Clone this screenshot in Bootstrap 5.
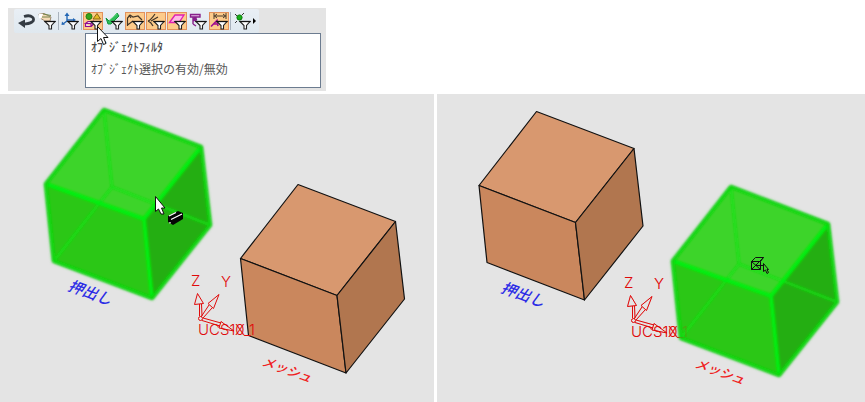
<!DOCTYPE html>
<html lang="ja">
<head>
<meta charset="utf-8">
<meta name="viewport" content="width=device-width, initial-scale=1">
<title>オブジェクトフィルタ</title>
<link rel="stylesheet" href="https://cdn.jsdelivr.net/npm/bootstrap@5.3.0/dist/css/bootstrap.min.css">
<style>
body{background:#fff;font-family:"Liberation Sans","Noto Sans CJK JP",sans-serif}
.page-stack{gap:3px}
.filter-panel{background:#e4e4e4;margin:8px 0 0 8px;padding:1px 5px 3px 6px;width:318px;max-width:100%}
.filter-bar{background:linear-gradient(#e9eff5,#dfe8ef);height:24px;width:245px;gap:1px;padding:0 2px;border-radius:2px}
.tool{width:20px;height:18px;padding:0;border:1px solid transparent;background:none;flex:none;display:block}
.tool[aria-pressed=true]{background:#fdcb8a;border-color:#e2915c}
.tool svg{display:block;margin:-1px;width:20px;height:18px}
.divider{width:1px;height:18px;background:#a9b3bd;flex:none}
.hint{background:#fff;border:1px solid #6c7c90;margin-left:71px;height:55px;padding:5px;color:#555;font-family:"Noto Sans CJK JP",sans-serif}
.hint-title{font-size:12px;line-height:16px;font-weight:500;color:#4a4a4a}
.hint-text{font-size:12px;line-height:16px;margin-top:6px}
.pointer{left:88px;top:17px;width:13px;height:21px}
.views{display:grid;grid-template-columns:434fr 428fr;gap:3px}
.view{background:#e4e4e4}
.view svg{display:block;width:100%;height:auto}
.lbl{font:500 15px "Noto Sans CJK JP",sans-serif}
.axis{font:300 15px Inter,"Liberation Sans",sans-serif;fill:#e00a0a}
</style>
<script src="https://cdn.jsdelivr.net/npm/bootstrap@5.3.0/dist/js/bootstrap.bundle.min.js"></script>
</head>
<body>
<svg width="0" height="0" class="position-absolute" aria-hidden="true">
<defs>
<g id="funnel"><path d="M8 9.5H18L14.5 13.5V17H12V13.5Z" fill="#fff" stroke="#222" stroke-width="1.1"/><path d="M7.500 9.500H18.500" stroke="#111" stroke-width="1.3"/></g>
<filter id="glow" x="-10%" y="-10%" width="120%" height="120%"><feGaussianBlur stdDeviation="1.5"/></filter>
<filter id="soft" x="-10%" y="-10%" width="120%" height="120%"><feGaussianBlur stdDeviation="1"/></filter>
<g id="block" stroke="#111" stroke-width="1.2" stroke-linejoin="round">
<path d="M298 184.500L395.500 221.500L337 295.500L240.500 258.500Z" fill="#d8986f"/>
<path d="M240.500 258.500L337 295.500L346 373L248.500 335.500Z" fill="#ca875d"/>
<path d="M395.500 221.500L404.500 299L346 373L337 295.500Z" fill="#b1764f"/>
</g>
<g id="picked" stroke-linejoin="round" fill="none">
<path d="M104 110L201 147L210 225L152 298L54 261L46 184Z" stroke="#44c944" stroke-width="4" filter="url(#glow)"/>
<path d="M104 110L201 147L144 219L46 184Z" fill="#3dd42a"/>
<path d="M46 184L144 219L152 298L54 261Z" fill="#2bc716"/>
<path d="M201 147L210 225L152 298L144 219Z" fill="#24ae12"/>
<g filter="url(#soft)">
<path d="M104 110L112 187L210 225M112 187L54 261" stroke="#10e410" stroke-width="2.500" opacity=".8"/>
<path d="M46 184L144 219L152 298M144 219L201 147" stroke="#00ee08" stroke-width="4"/>
<path d="M104 110L201 147L210 225L152 298L54 261L46 184Z" stroke="#0bd80b" stroke-width="3"/>
</g>
</g>
<g id="ucs">
<g fill="none" stroke="#e00a0a" stroke-width="1">
<circle cx="200.500" cy="318.500" r="2"/>
<path d="M199.500 316V304M202 316L201.500 304M194.500 304.500L197.500 293.500L203.500 303.500ZM201 317L209 305M203 318L212 308M208 303.500L219 294.500L213.500 308.500ZM203 318L221 323M202 320.500L220 326M221 321.500L234 331L219 328Z"/>
</g>
<g class="axis"><text x="191" y="286">Z</text><text x="221" y="287">Y</text><text x="198" y="335">UCS10_1</text><text x="235" y="335">X</text></g>
</g>
<g id="names" class="lbl">
<text transform="translate(67 290) rotate(20) skewX(-15)" fill="#2c2ce6">押出し</text>
<text transform="translate(261 365) rotate(20) skewX(-15)" fill="#ef2020" font-size="13">メッシュ</text>
</g>
</defs>
</svg>
<main class="d-flex flex-column page-stack">
<section class="filter-panel position-relative">
<div class="filter-bar d-flex align-items-center" role="toolbar" aria-label="フィルタ">
<button class="tool" type="button" aria-label="戻る"><svg viewBox="0 0 20 18"><path d="M8 4.500C16 2 20 7 16 10C13 12 10 12 7 12" fill="none" stroke="#343b43" stroke-width="2.800"/><path d="M2 11L9 7.500V16Z" fill="#343b43"/></svg></button>
<button class="tool" type="button" aria-label="選択"><svg viewBox="0 0 20 18"><path d="M2 2L7 1.500L14 5L13 9L8 9L3 6Z" fill="#f5d9b5" stroke="#9b8970"/><path d="M2 1.500L6 2L4 7L2 6Z" fill="#fff"/><path d="M6 2L14 3.500M5 5H13" stroke="#74864c"/><use href="#funnel"/></svg></button>
<span class="divider"></span>
<button class="tool" type="button" aria-label="座標系"><svg viewBox="0 0 20 18"><path d="M7 2V10M7 9L3 12M7 8H14" fill="none" stroke="#2367b5" stroke-width="1.400"/><path d="M4.500 4L7 .5L9.500 4ZM1.500 13L2 9.500L5 12.500ZM13 6L16 8L13 10Z" fill="#2367b5"/><use href="#funnel"/></svg></button>
<span class="divider"></span>
<button class="tool" type="button" aria-label="オブジェクトフィルタ" aria-pressed="true" aria-describedby="filter-hint"><svg viewBox="0 0 20 18"><circle cx="6" cy="4.500" r="3" fill="#36a51a" stroke="#247d13"/><path d="M10 7L14 1.500L17.500 7Z" fill="#e5b928" stroke="#8b6811"/><path d="M2.500 11.500L5 9.500H10L8 11.500ZM2.500 11.500V14.500H8V11.500L10 9.500V12.500L8 14.500" fill="#f3d9f0" stroke="#900c90" stroke-width="1.200"/><use href="#funnel"/></svg></button>
<button class="tool" type="button" aria-label="面"><svg viewBox="0 0 20 18"><path d="M2 6L5 9L13 1L15 4L7 12H4Z" fill="#2dbd58" stroke="#12933b"/><path d="M5 8.500L13 1.500" stroke="#82e69a"/><use href="#funnel"/></svg></button>
<button class="tool" type="button" aria-label="エッジ" aria-pressed="true"><svg viewBox="0 0 20 18"><path d="M2.500 14V6L5 3L8 5L13 4L17 8M2.500 13L8 9M4 3L6 6" fill="none" stroke="#423528" stroke-width="1.200"/><use href="#funnel"/></svg></button>
<button class="tool" type="button" aria-label="曲線" aria-pressed="true"><svg viewBox="0 0 20 18"><path d="M9 2C7 5 5 8 2 9M2 9C5 10 6 12 7 14M5 9L12 5" fill="none" stroke="#423528" stroke-width="1.200"/><use href="#funnel"/></svg></button>
<button class="tool" type="button" aria-label="平面" aria-pressed="true"><svg viewBox="0 0 20 18"><path d="M2.500 10.500L8 3H17L12 10.500Z" fill="#ffb9e5" stroke="#df20b1" stroke-width="1.300"/><use href="#funnel"/></svg></button>
<button class="tool" type="button" aria-label="部品"><svg viewBox="0 0 20 18"><path d="M2.500 2.500H12V5H2.500ZM5 5V12M8 5V10M5 7L8 6M5 9L9 7M5 12L8 14" fill="#e6bde6" stroke="#87208b" stroke-width="1.400"/><use href="#funnel"/></svg></button>
<button class="tool" type="button" aria-label="寸法" aria-pressed="true"><svg viewBox="0 0 20 18"><path d="M5 1V7M17 1V7M5 4H17M8 2L5.500 4L8 6M14 2L16.500 4L14 6" fill="none" stroke="#493b2b"/><path d="M2 14.500L8 8.500L9 14M4 12H9" fill="none" stroke="#a01091" stroke-width="1.600"/><use href="#funnel"/></svg></button>
<span class="divider"></span>
<button class="tool" type="button" aria-label="点"><svg viewBox="0 0 20 18"><path d="M3 2L5 4M12 1L10 3M3 11L5 9" stroke="#333"/><circle cx="7.500" cy="5.500" r="2.600" fill="#18af18" stroke="#087908"/><use href="#funnel"/></svg></button>
<svg width="4" height="6" viewBox="0 0 4 6" aria-hidden="true"><path d="M0 0L3 3L0 6Z"/></svg>
</div>
<div class="hint" id="filter-hint" role="tooltip">
<div class="hint-title">ｵﾌﾞｼﾞｪｸﾄﾌｨﾙﾀ</div>
<div class="hint-text">ｵﾌﾞｼﾞｪｸﾄ選択の有効/無効</div>
</div>
<svg class="pointer position-absolute" viewBox="0 0 13 21" aria-hidden="true"><path d="M1.500 1.500V16.500L5 13.500L7.500 19.500L10 18.500L7.500 12.500H12Z" fill="#fff" stroke="#111"/></svg>
</section>
<section class="views">
<div class="view"><svg viewBox="0 94 434 308" role="img" aria-label="押出しを選択">
<use href="#picked"/><use href="#block"/><use href="#ucs"/><use href="#names"/>
<path d="M155.500 196.500V211.500L158.500 209L161 214H164L161.500 208H165Z" fill="#fff" stroke="#111"/>
<path d="M168 216L178 211L183 213V219L173 225L168 222Z" fill="#050505"/><path d="M169 216L176 212.500M171 219.500L182 214M170 222V223.500" stroke="#fff" stroke-width="1.200"/>
</svg></div>
<div class="view"><svg viewBox="437 94 428 308" role="img" aria-label="メッシュを選択">
<use href="#block" x="238.500" y="-73"/><use href="#ucs" x="433" y="2"/><use href="#picked" x="627" y="77"/><use href="#ucs" x="433" y="2" opacity=".2"/><use href="#names" x="433" y="2"/>
<path d="M751.500 261.500H760.500V269.500H751.500ZM751.500 261.500L755.500 257.500H763.500L760.500 261.500M751.500 261.500L760.500 269.500M751.500 269.500L763.500 257.500M755 265.500H763" fill="none" stroke="#111"/>
<path d="M763.500 263.500V271.500L765.500 270L767 273.500L768.500 272.500L767 269.500H768.500Z" fill="#3dd42a" stroke="#111"/>
</svg></div>
</section>
</main>
</body>
</html>
